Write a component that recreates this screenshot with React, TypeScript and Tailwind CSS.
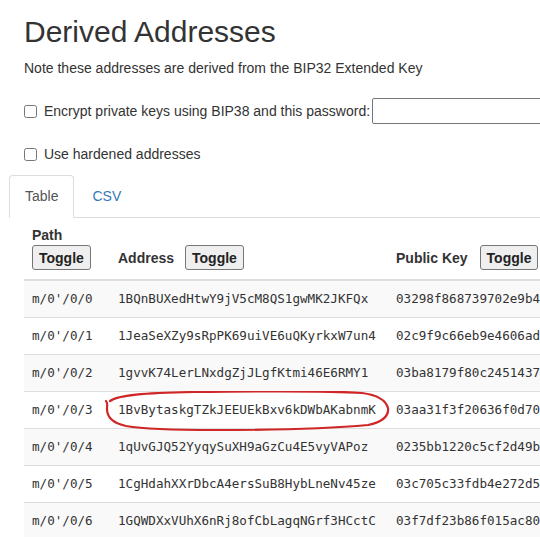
import React from 'react';

const rows = [
    ["m/0'/0/0", '1BQnBUXedHtwY9jV5cM8QS1gwMK2JKFQx', '03298f868739702e9b4c1d2e7a60f3b95d0c8e41a7f2b6d39c0e5a8174bd2f6c03'],
    ["m/0'/0/1", '1JeaSeXZy9sRpPK69uiVE6uQKyrkxW7un4', '02c9f9c66eb9e4606ad7e21b53f80c9a4d6e1f27b08c35d9a4e6f7012b8c3d5e91'],
    ["m/0'/0/2", '1gvvK74LerLNxdgZjJLgfKtmi46E6RMY1', '03ba8179f80c24514379e0d2c6a51b8f47e3d90c2a6b18f5e4d7c03a9b2e61f85d'],
    ["m/0'/0/3", '1BvBytaskgTZkJEEUEkBxv6kDWbAKabnmK', '03aa31f3f20636f0d7082c4e1b9a5f6d3e72c80b41d9a5e6f3c27b08d4e1a9f6c2'],
    ["m/0'/0/4", '1qUvGJQ52YyqySuXH9aGzCu4E5vyVAPoz', '0235bb1220c5cf2d49b8e03f1a7c6d25e94b0f8a3c17d6e52b9f04a8c3e71d2b6f'],
    ["m/0'/0/5", '1CgHdahXXrDbcA4ersSuB8HybLneNv45ze', '03c705c33fdb4e272d51a8e9c06b3f27d4e19a5c80b2f6d3e7a41c95b08d2e6f1a'],
    ["m/0'/0/6", '1GQWDXxVUhX6nRj8ofCbLagqNGrf3HCctC', '03f7df23b86f015ac80e4d2b9c1a67f35e08d4c2b91a7f6e3d50c8b24a9e1f7d3c'],
];

const ToggleButton = () => (
    <button className="h-[25px] px-[6px] border border-[#767676] bg-[#efefef] rounded-[3px] font-bold text-[14px] leading-[20px] text-[#222]">
        Toggle
    </button>
);

export default function App() {
    return (
        <div className="w-[540px] h-[537px] overflow-hidden bg-white font-['Liberation_Sans',Arial,sans-serif] text-[14px] leading-[20px] text-[#333]">
            <div className="pl-[24px] w-[700px]">
                <h2 className="pt-[15px] mb-[10px] text-[30px] leading-[33px] font-normal text-[#333]">Derived Addresses</h2>
                <p className="mb-[20px]">Note these addresses are derived from the BIP32 Extended Key</p>

                <div className="flex items-center h-[26px] mb-[20px]">
                    <input type="checkbox" className="w-[13px] h-[13px] mr-[7px]" />
                    <span>Encrypt private keys using BIP38 and this password:</span>
                    <input type="text" className="ml-[2px] w-[300px] h-[26px] border border-[#767676] rounded-[2px]" />
                </div>

                <div className="flex items-center h-[20px] mb-[11px]">
                    <input type="checkbox" className="w-[13px] h-[13px] mr-[7px]" />
                    <span>Use hardened addresses</span>
                </div>
            </div>

            {/* tabs */}
            <div className="ml-[9px] w-[700px] flex border-b border-[#ddd]">
                <div className="-mb-px px-[15px] py-[10px] border border-[#ddd] border-b-white rounded-t-[4px] bg-white text-[#555]">Table</div>
                <div className="ml-[2px] px-[15px] py-[10px] border border-transparent text-[#337ab7]">CSV</div>
            </div>

            {/* derived table */}
            <table className="ml-[24px] w-[800px] table-fixed border-collapse">
                <colgroup>
                    <col className="w-[86px]" />
                    <col className="w-[278px]" />
                    <col />
                </colgroup>
                <thead>
                    <tr className="border-b-2 border-[#ddd]">
                        <th className="pt-[7px] px-[8px] pb-[9px] text-left align-bottom font-bold">
                            <div>Path</div>
                            <ToggleButton />
                        </th>
                        <th className="pt-[7px] px-[8px] pb-[9px] text-left align-bottom font-bold whitespace-nowrap">
                            <span className="mr-[11px]">Address</span>
                            <ToggleButton />
                        </th>
                        <th className="pt-[7px] px-[8px] pb-[9px] text-left align-bottom font-bold whitespace-nowrap">
                            <span className="mr-[12px]">Public Key</span>
                            <ToggleButton />
                        </th>
                    </tr>
                </thead>
                <tbody className="font-['DejaVu_Sans_Mono',monospace] text-[12.6px]">
                    {rows.map(([path, addr, pub], i) => (
                        <tr key={path} className={(i % 2 === 0 ? 'bg-[#f9f9f9] ' : 'bg-white ') + 'border-t border-[#ddd]'}>
                            <td className="px-[8px] py-[8px] leading-[20px] whitespace-nowrap">{path}</td>
                            <td className="px-[8px] py-[8px] leading-[20px] whitespace-nowrap relative">
                                {addr}
                                {i === 3 && (
                                    <svg className="absolute left-[-6px] top-[-1px] pointer-events-none" width="290" height="42" viewBox="0 0 290 42">
                                        <path
                                            d="M6 10 C14 4 40 2 90 1 C160 0 230 0 258 2 C274 4 282 10 284 17 C285 25 278 31 264 34 C220 38 150 39 110 39 C70 39 40 38 22 35 C8 32 3 26 3 18 C3 14 4 12 2 10"
                                            fill="none"
                                            stroke="#d02626"
                                            strokeWidth="2.2"
                                            strokeLinecap="round"
                                        />
                                    </svg>
                                )}
                            </td>
                            <td className="px-[8px] py-[8px] leading-[20px] whitespace-nowrap overflow-hidden">{pub}</td>
                        </tr>
                    ))}
                </tbody>
            </table>
        </div>
    );
}
